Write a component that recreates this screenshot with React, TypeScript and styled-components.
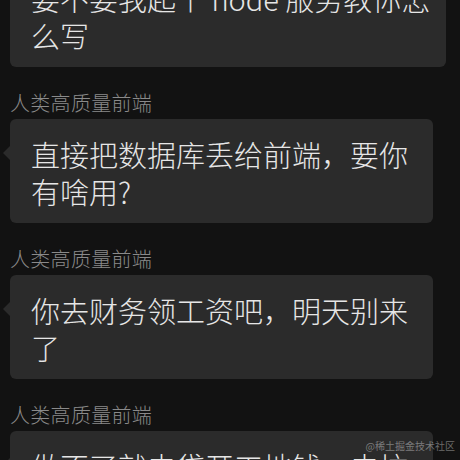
import React from "react";
import styled, { createGlobalStyle } from "styled-components";

const Global = createGlobalStyle`
  html, body {
    margin: 0;
    padding: 0;
    background: #121212;
    overflow: hidden;
  }
  body {
    font-family: "Noto Sans CJK SC", "Noto Sans", sans-serif;
  }
`;

const Screen = styled.div`
  position: relative;
  width: 460px;
  height: 460px;
  overflow: hidden;
  background: #121212;
`;

const Thread = styled.div`
  display: flex;
  flex-direction: column;
  padding: 0 10px;
  margin-top: -37px;
`;

const Message = styled.div`
  display: flex;
  flex-direction: column;
  align-items: flex-start;
  gap: 4px;
`;

const Name = styled.div`
  margin-top: 24px;
  font-size: 20px;
  line-height: 24px;
  font-weight: 300;
  color: #8a8a8a;
  letter-spacing: 0.3px;
`;

const Bubble = styled.div<{ $width: number; $tail?: boolean }>`
  position: relative;
  box-sizing: border-box;
  width: ${(p) => p.$width}px;
  padding: 17px 20px 13px 21px;
  background: #2b2b2b;
  border-radius: 6px;
  color: #e6e6e6;
  font-size: 29px;
  font-weight: 300;
  line-height: 37px;
  &::before {
    content: "";
    display: ${(p) => (p.$tail ? "block" : "none")};
    position: absolute;
    left: -7px;
    top: 27px;
    border-top: 7px solid transparent;
    border-bottom: 7px solid transparent;
    border-right: 7px solid #2b2b2b;
  }
`;

const Line = styled.span`
  display: block;
  white-space: nowrap;
`;

const Watermark = styled.div`
  position: absolute;
  right: 5px;
  top: 440px;
  font-size: 10px;
  line-height: 12px;
  color: rgba(255, 255, 255, 0.38);
  font-family: "Noto Sans CJK SC", sans-serif;
`;

const messages: string[][] = [
  ["直接把数据库丢给前端，要你", "有啥用?"],
  ["你去财务领工资吧，明天别来", "了"],
  ["做不了就去贷开工地钱，去坑", "呢"],
];

export default function App() {
  return (
    <Screen>
      <Global />
      <Thread>
        <Message>
          <Bubble $width={436}>
            <Line>要不要我起个 node 服务教你怎</Line>
            <Line>么写</Line>
          </Bubble>
        </Message>
        {messages.map((m, i) => (
          <Message key={i}>
            <Name>人类高质量前端</Name>
            <Bubble $width={423} $tail>
              {m.map((l, j) => (
                <Line key={j}>{l}</Line>
              ))}
            </Bubble>
          </Message>
        ))}
      </Thread>
      <Watermark>@稀土掘金技术社区</Watermark>
    </Screen>
  );
}
